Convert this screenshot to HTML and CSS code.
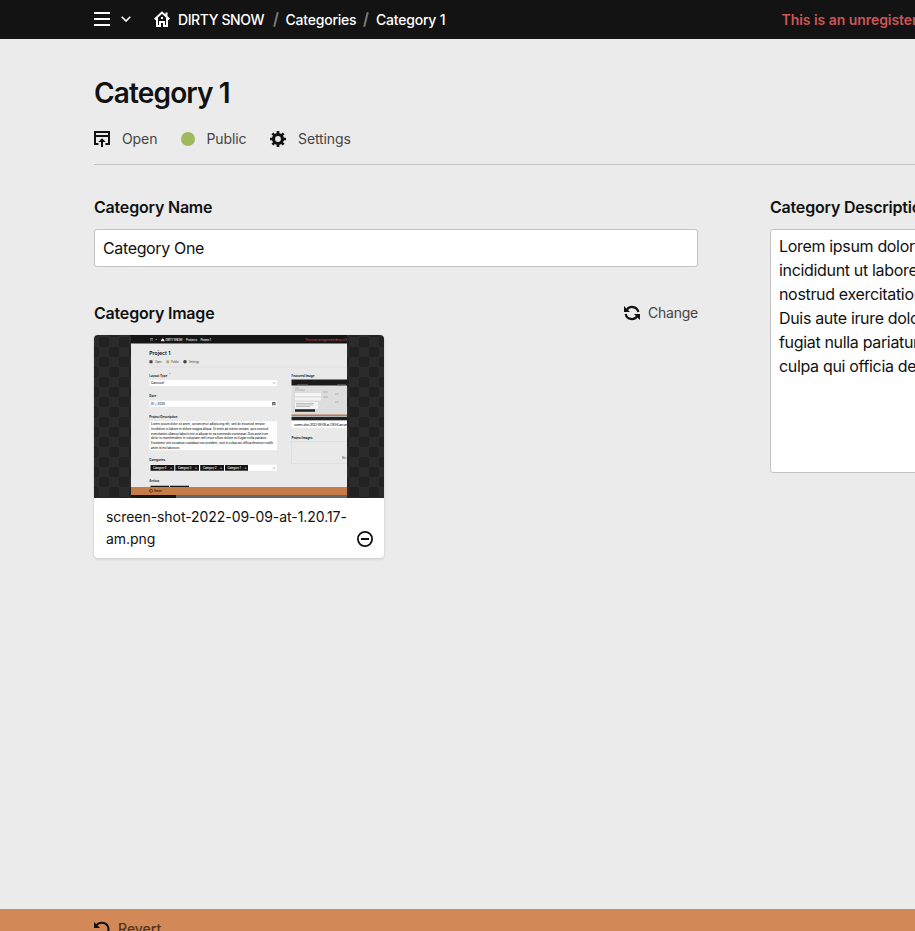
FILE: index.html
```html
<!DOCTYPE html>
<html lang="en">
<head>
<meta charset="utf-8">
<title>Category 1</title>
<link rel="stylesheet" href="styles.css">
</head>
<body>
<div class="app">
  <header class="topbar">
    <svg class="icon menu" viewBox="0 0 16 16"><path d="M0 2h16M0 8h16M0 14h16" stroke="currentColor" stroke-width="2"/></svg>
    <svg class="chevron" viewBox="0 0 10 6"><path d="M.7.7 5 5 9.3.7" fill="none" stroke="currentColor" stroke-width="1.6"/></svg>
    <nav class="crumbs">
      <svg class="icon home" viewBox="0 0 16 16"><path d="M.7 8.3 8 1.500l7.300 6.800M12.500 5V1.500M3 7v8h3v-4h4v4h3V7" fill="none" stroke="currentColor" stroke-width="2"/><path d="M7 6h2v2H7z" fill="currentColor"/></svg>
      <span class="crumb site">DIRTY SNOW</span><i class="slash"></i>
      <span class="crumb cats">Categories</span><i class="slash"></i>
      <span class="crumb">Category 1</span>
    </nav>
    <span class="notice">This is an unregistered demo of Kirby</span>
  </header>
  <main class="page">
    <h1>Category 1</h1>
    <div class="actions">
      <span class="action open"><svg class="icon" viewBox="0 0 16 16"><path d="M4.500 13H1V1h14v12h-3.500M1 5h14" fill="none" stroke="currentColor" stroke-width="2"/><path d="M8 7.200 11.700 11H9v5H7v-5H4.300z" fill="currentColor"/></svg><span class="label">Open</span></span>
      <span class="action public"><i class="dot"></i><span class="label">Public</span></span>
      <span class="action settings"><svg class="icon" viewBox="0 0 16 16"><g fill="none" stroke="currentColor"><circle cx="8" cy="8" r="4.500" stroke-width="3.200"/><path d="M8 0v3M8 13v3M0 8h3M13 8h3M2.400 2.400l2 2M11.600 11.600l2 2M2.400 13.600l2-2M11.600 4.400l2-2" stroke-width="2.700"/></g></svg><span class="label">Settings</span></span>
    </div>
    <div class="columns">
      <section class="main-col">
        <label class="field-label name-label">Category Name</label>
        <div class="input">Category One</div>
        <div class="image-head">
          <span class="field-label image-label">Category Image</span>
          <span class="change"><svg class="icon" viewBox="0 0 16 16"><path d="M3 4.500C5.600.8 12.800.8 14.400 7M13 11.500C10.400 15.200 3.200 15.200 1.600 9" fill="none" stroke="currentColor" stroke-width="2.200"/><path d="M0 1v6h6zM16 15V9h-6z" fill="currentColor"/></svg><span class="label">Change</span></span>
        </div>
        <article class="card">
          <svg class="thumb" viewBox="94 335 290 163">
            <defs><pattern id="check" x="99" y="347" width="20" height="20" patternUnits="userSpaceOnUse"><path fill="#222" d="M0 0h20v20H0z"/><path fill="#2b2b2b" d="M0 0h10v10H0zM10 10h10v10H10z"/></pattern>
            <clipPath id="shot"><path d="M131 335h216v163H131z"/></clipPath></defs>
            <path fill="url(#check)" d="M94 335h290v163H94z"/>
            <g clip-path="url(#shot)">
              <path fill="#e9e9e9" d="M131 335h216v163H131z"/>
              <path fill="#151515" d="M131 335h216v8.500H131z"/>
              <path stroke="#aaa" stroke-width=".7" d="M150 338.500h3M150 340h3M155.500 339.500h1.500"/>
              <path fill="#ddd" d="M161 340l1.700-1.800 1.700 1.800v1.300H161z"/>
              <g class="tiny">
                <text x="165.500" y="340.700" fill="#eee" textLength="17" class="light">DIRTY SNOW</text><text x="186" y="340.700" textLength="11" class="light">Projects</text><text x="200.500" y="340.700" textLength="10.500" class="light">Project 1</text>
                <text x="305" y="340.700" class="red" textLength="48">This is an unregistered demo of Kirby</text>
                <text class="title" x="149.300" y="355.200" textLength="21">Project 1</text>
                <path fill="#444" d="M149.500 360.300h3v3h-3z"/><circle cx="167.700" cy="361.800" r="1.600" fill="#9bb95b"/><circle cx="185" cy="361.800" r="1.800" fill="#444"/>
                <g class="muted"><text x="155" y="363" textLength="6.500">Open</text><text x="171" y="363" textLength="8">Public</text><text x="188.700" y="363" textLength="10.500">Settings</text></g>
                <path d="M149 367h198" stroke="#ddd" stroke-width=".6"/>
                <g class="strong"><text x="149.300" y="376.500" textLength="18">Layout Type</text><text x="149.300" y="397.200" textLength="7">Date</text><text x="149.300" y="417.500" textLength="28">Project Description</text><text x="149.300" y="461" textLength="16">Categories</text><text x="149.300" y="481.700" textLength="10">Artists</text><text x="291.500" y="376.500" textLength="23">Featured Image</text><text x="291.500" y="438.500" textLength="21">Project Images</text></g>
                <text x="169" y="376" class="red">*</text>
                <path fill="#fff" d="M149.500 380H277v6H149.500zM149.500 400.700H277v6H149.500zM149.500 421.300H277v29H149.500zM149.500 464.700H277v6H149.500z"/>
                <g><text x="151" y="384.400" textLength="13">Carousel</text><text x="151" y="405.100" textLength="14">01 / 2020</text>
                <text x="151" y="425.300" textLength="114">Lorem ipsum dolor sit amet, consectetur adipiscing elit, sed do eiusmod tempor</text>
                <text x="151" y="430" textLength="117">incididunt ut labore et dolore magna aliqua. Ut enim ad minim veniam, quis nostrud</text>
                <text x="151" y="434.600" textLength="117">exercitation ullamco laboris nisi ut aliquip ex ea commodo consequat. Duis aute irure</text>
                <text x="151" y="439.300" textLength="116">dolor in reprehenderit in voluptate velit esse cillum dolore eu fugiat nulla pariatur.</text>
                <text x="151" y="444" textLength="122">Excepteur sint occaecat cupidatat non proident, sunt in culpa qui officia deserunt mollit</text>
                <text x="151" y="448.600" textLength="29">anim id est laborum.</text></g>
                <path d="M273 382.500l1 1 1-1M273 467.500l1 1 1-1" fill="none" stroke="#444" stroke-width=".5"/><path fill="#555" d="M272.200 402h3.300v3.300h-3.300z"/><path fill="#bbb" d="M273 403.300h1.700v1.200H273z"/>
                <path fill="#151515" d="M150.500 465h23.800v5.700h-23.800zM175.300 465H199v5.700h-23.700zM200.200 465H224v5.700h-23.800zM225 465h23v5.700h-23zM150.500 485.700h18.800v2h-18.800zM170 485.700h19v2h-19z"/>
                <g class="light"><text x="153" y="469" textLength="13.500">Category 4</text><text x="178" y="469" textLength="13.500">Category 3</text><text x="203" y="469" textLength="13.500">Category 2</text><text x="227.500" y="469" textLength="13.500">Category 1</text><text x="170" y="469">×</text><text x="195" y="469">×</text><text x="220" y="469">×</text><text x="244.500" y="469">×</text></g>
                <path fill="#1b1b1b" d="M291.500 379.500H347v6h-55.500z"/><path stroke="#777" stroke-width=".5" d="M297 384.500h11M337 384.500h9"/>
                <path fill="#ddd" d="M291.500 386H347v29h-55.500z"/><path fill="#f4f4f4" d="M295 393h26v3h-26zM295 397.500h26v3h-26zM295 402h23v7h-23z"/>
                <path fill="#222" d="M295 409.200h20v2.500h-20zM291.500 416.800H347v3.400h-55.500z"/>
                <path stroke="#888" stroke-width=".5" d="M295 388h4M295 390h10M323 392h5M335 394h4M323 397h5M335 402h4M296 403.500h18M296 405h17M296 406.500h14"/>
                <path fill="#bd794e" d="M291.500 414.500H347v1.600h-55.500z"/>
                <path fill="#fff" d="M291.500 421H347v6.700h-55.500z"/><text x="294" y="425.500" textLength="55">screen-shot-2022-09-09-at-1.19.54-am.png</text>
                <path fill="none" stroke="#ddd" stroke-width=".7" d="M350 441.500h-58.500v22H350"/><text x="342" y="459" class="muted" textLength="4">No</text>
              </g>
              <path fill="#c57c49" d="M131 487h216v8H131z"/><circle cx="151" cy="490.800" r="1.500" fill="none" stroke="#40240f" stroke-width=".7"/><text class="tiny" x="154" y="492" textLength="8">Revert</text>
              <path fill="#666" d="M131 495h216v3H131z"/><path fill="#171717" d="M131 495h45v3h-45z"/>
            </g>
          </svg>
          <div class="card-foot"><span class="filename">screen-shot-2022-09-09-at-1.20.17-<br>am.png</span><svg class="icon remove" viewBox="0 0 16 16"><circle cx="8" cy="8" r="7.100" fill="none" stroke="currentColor" stroke-width="1.800"/><path d="M4 8h8" stroke="currentColor" stroke-width="2"/></svg></div>
        </article>
      </section>
      <section class="side-col">
        <label class="field-label desc-label">Category Description</label>
        <div class="textarea">Lorem ipsum dolor sit amet,<br>incididunt ut labore et dolore<br>nostrud exercitation ullamco<br>Duis aute irure dolor in<br>fugiat nulla pariatur.<br>culpa qui officia deserunt</div>
      </section>
    </div>
  </main>
  <footer class="savebar"><svg class="icon" viewBox="0 0 16 16"><path d="M2.500 4.500C6-.5 14.500 1.500 14.500 8.500c0 4-4 6.500-7.500 6" fill="none" stroke="currentColor" stroke-width="2"/><path d="M0 1v6h6z" fill="currentColor"/></svg><span class="revert">Revert</span></footer>
</div>
</body>
</html>
```
FILE: styles.css
```css
* { box-sizing: border-box; }
body { margin: 0; background: #ebebeb; color: #111; font-family: Inter, "Liberation Sans", sans-serif; font-size: 16px; overflow: hidden; }
.app { width: 915px; height: 931px; display: flex; flex-direction: column; overflow: hidden; }
.icon { width: 16px; height: 16px; flex: none; display: block; }
.topbar { height: 39px; flex: none; display: flex; align-items: center; padding: 0 0 1px 94px; background: #131313; color: #fff; font-size: 14px; font-weight: 500; white-space: nowrap; }
.chevron { width: 10px; height: 6px; margin: 0 23px 0 11px; flex: none; }
.crumbs { display: flex; align-items: center; flex: none; }
.site { margin-left: 8px; width: 87px; }
.cats { width: 70px; }
.crumb { letter-spacing: -.22px; }
.crumb.site { letter-spacing: -.4px; }
.slash { width: 1.5px; height: 15px; background: #777; transform: rotate(14deg); margin: 0 9.500px 0 9.500px; }
.notice { margin-left: auto; width: 133.500px; color: #cd5558; font-weight: 600; letter-spacing: -.05px; }
.page { flex: 1; min-height: 0; padding: 37px 0 0 94px; }
h1 { margin: 0; font-size: 28px; line-height: 35px; font-weight: 600; letter-spacing: -.85px; }
.actions { height: 54px; display: flex; align-items: flex-start; padding-top: 20px; border-bottom: 1px solid #c5c5c5; font-size: 14px; line-height: 16px; color: #444; letter-spacing: -.1px; }
.action, .change { display: flex; align-items: center; }
.action .icon, .change .icon { color: #111; }
.open .label { margin-left: 12px; width: 35px; }
.public { margin-left: 24px; }
.dot { width: 14px; height: 14px; border-radius: 50%; background: #9fb95f; }
.public .label { margin-left: 11.500px; width: 39px; }
.settings { margin-left: 24.500px; }
.settings .label { margin-left: 12px; }
.columns { display: flex; gap: 72px; padding-top: 32px; }
.main-col { width: 604px; flex: none; }
.side-col { width: 604px; flex: none; }
.field-label { display: block; font-weight: 600; font-size: 16px; line-height: 20px; letter-spacing: -.2px; }
.input { margin-top: 12px; height: 38px; background: #fff; border: 1px solid #c4c4c4; border-radius: 3px; padding: 0 8px; line-height: 36px; letter-spacing: -.36px; }
.image-head { height: 20px; margin-top: 36px; display: flex; justify-content: space-between; align-items: center; }
.change { gap: 8px; font-size: 14px; color: #444; line-height: 16px; letter-spacing: -.22px; }
.card { width: 290px; height: 223px; margin-top: 12px; background: #fff; border-radius: 4px; overflow: hidden; box-shadow: 0 1px 3px rgba(0,0,0,.16); }
.thumb { display: block; width: 290px; height: 163px; }
.card-foot { display: flex; justify-content: space-between; padding: 8px 11px 0 12px; font-size: 14px; line-height: 22px; }
.filename { white-space: nowrap; letter-spacing: -.06px; }
.remove { margin-top: 25px; }
.textarea { margin-top: 12px; height: 244px; background: #fff; border: 1px solid #c4c4c4; border-radius: 3px; padding: 4px 8px; line-height: 24px; white-space: nowrap; letter-spacing: -.33px; }
.tiny { font-size: 3px; font-weight: 500; fill: #222; }
.light { fill: #eee; }
.red { fill: #b44747; }
.muted { fill: #666; }
.strong { font-weight: 700; }
.title { font-size: 5px; font-weight: 700; }
.savebar { height: 22px; flex: none; display: flex; align-items: flex-start; padding: 12px 0 0 94px; background: #d38957; font-size: 14px; line-height: 17px; font-weight: 500; }
.revert { margin: -1px 0 0 8px; color: #523522; }
```
